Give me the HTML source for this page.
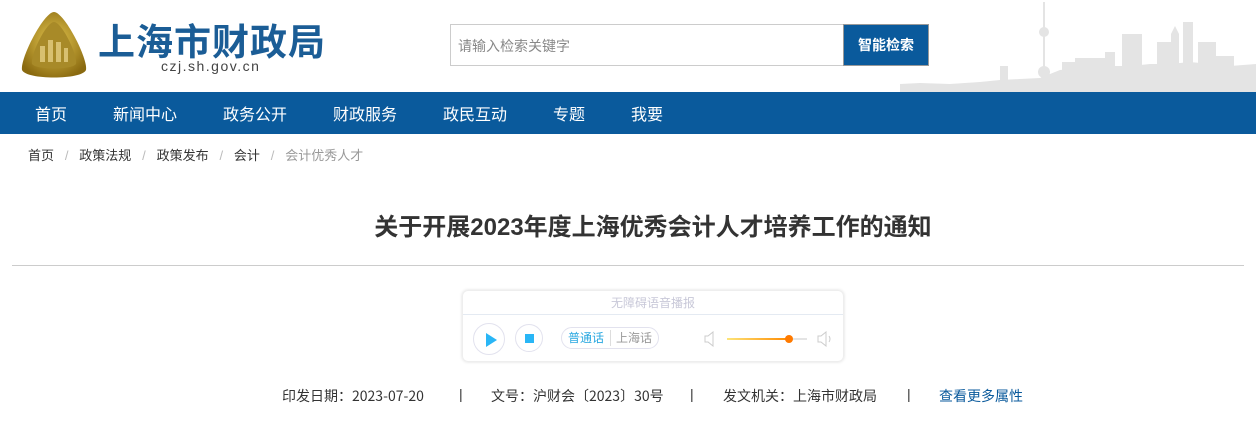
<!DOCTYPE html>
<html><head><meta charset="utf-8"><style>
*{margin:0;padding:0;box-sizing:border-box}
body{width:1256px;height:425px;background:#fff;font-family:"Liberation Sans","Noto Sans CJK SC",sans-serif;position:relative;overflow:hidden;color:#333}
.abs{position:absolute}
.nav{left:0;top:92px;width:1256px;height:42px;background:#0a5a9c}
.nav span{position:absolute;top:9px;color:#fff;font-size:16px}
.bc{top:145px;font-size:13px;color:#333}
.sep{color:#bbb}
</style></head><body>
<svg class="abs" style="left:900px;top:0" width="356" height="92" viewBox="0 0 356 92">
<g fill="#e4e4e4">
<polygon points="0,92 0,84 20,83 50,84 80,82 100,80 120,79 140,78 160,70 200,66 230,66 250,64 270,64 290,62 310,64 330,66 356,64 356,92"/>
<rect x="143" y="2" width="2" height="86"/>
<circle cx="144" cy="32" r="5"/><circle cx="144" cy="72" r="6"/>
<rect x="162" y="62" width="20" height="30"/>
<rect x="175" y="58" width="30" height="34"/>
<rect x="205" y="52" width="10" height="40"/>
<rect x="222" y="34" width="20" height="58"/>
<rect x="257" y="42" width="14" height="50"/>
<polygon points="271,92 271,34 275,26 279,34 279,92"/>
<rect x="283" y="22" width="10" height="70"/>
<rect x="298" y="42" width="18" height="50"/>
<rect x="316" y="56" width="18" height="36"/>
<rect x="336" y="66" width="20" height="26"/>
<rect x="100" y="66" width="8" height="26"/>
</g></svg>
<svg class="abs" style="left:16px;top:10px" width="76" height="70" viewBox="0 0 76 70">
<defs><radialGradient id="g" cx="50%" cy="45%" r="60%"><stop offset="0" stop-color="#e6c850"/><stop offset="1" stop-color="#8a6a10"/></radialGradient></defs>
<path d="M38 2 C48 2 72 48 70 60 C66 70 10 70 6 60 C4 48 28 2 38 2Z" fill="url(#g)"/>
<path d="M38 12 C46 12 62 46 60 54 C56 60 20 60 16 54 C14 46 30 12 38 12Z" fill="#a88a28"/>
<g fill="#d8c070"><rect x="24" y="36" width="5" height="16"/><rect x="32" y="30" width="5" height="22"/><rect x="40" y="32" width="5" height="20"/><rect x="48" y="38" width="4" height="14"/></g>
</svg>
<div class="abs" style="left:98px;top:12px;font-size:37px;font-weight:bold;color:#1b5d96;letter-spacing:1px">上海市财政局</div>
<div class="abs" style="left:161px;top:58px;font-size:14px;color:#444;letter-spacing:1.5px">czj.sh.gov.cn</div>
<div class="abs" style="left:450px;top:24px;width:394px;height:42px;border:1px solid #ccc;font-size:14px;color:#888;padding:11px 7px">请输入检索关键字</div>
<div class="abs" style="left:843px;top:24px;width:86px;height:42px;background:#0a5a9c;border:1px solid #999;color:#fff;font-size:14px;font-weight:bold;text-align:center;line-height:40px">智能检索</div>
<div class="abs nav">
<span style="left:35px">首页</span><span style="left:113px">新闻中心</span><span style="left:223px">政务公开</span><span style="left:333px">财政服务</span><span style="left:443px">政民互动</span><span style="left:553px">专题</span><span style="left:631px">我要</span>
</div>
<div class="abs bc" style="left:28px">首页 <span class="sep">&nbsp;&nbsp;/&nbsp;&nbsp;</span> 政策法规 <span class="sep">&nbsp;&nbsp;/&nbsp;&nbsp;</span> 政策发布 <span class="sep">&nbsp;&nbsp;/&nbsp;&nbsp;</span> 会计 <span class="sep">&nbsp;&nbsp;/&nbsp;&nbsp;</span> <span style="color:#999">会计优秀人才</span></div>
<div class="abs" style="left:0;width:1306px;top:207px;text-align:center;font-size:24px;font-weight:bold;color:#333">关于开展2023年度上海优秀会计人才培养工作的通知</div>
<div class="abs" style="left:12px;top:265px;width:1232px;height:1px;background:#ccc"></div>
<div class="abs" style="left:462px;top:290px;width:382px;height:72px;border:1px solid #eee;border-radius:6px;box-shadow:0 0 3px #ddd">
<div style="height:24px;border-bottom:1px solid #e4eaf2;text-align:center;font-size:12px;color:#c8c8d8;line-height:24px">无障碍语音播报</div>
<div class="abs" style="left:10px;top:32px;width:32px;height:32px;border:1px solid #e2e2ee;border-radius:50%"><div style="position:absolute;left:12px;top:9px;border-left:11px solid #29b6f6;border-top:7px solid transparent;border-bottom:7px solid transparent"></div></div>
<div class="abs" style="left:52px;top:33px;width:28px;height:28px;border:1px solid #e2e2ee;border-radius:50%"><div style="position:absolute;left:9px;top:9px;width:9px;height:9px;background:#29b6f6"></div></div>
<div class="abs" style="left:98px;top:36px;width:98px;height:22px;border:1px solid #e2e2ee;border-radius:11px;font-size:12px;line-height:20px"><span style="position:absolute;left:6px;color:#29a8e0">普通话</span><span style="position:absolute;left:48px;top:2px;height:16px;border-left:1px solid #ddd"></span><span style="position:absolute;left:54px;color:#999">上海话</span></div>
<svg class="abs" style="left:240px;top:40px" width="14" height="16"><path d="M2 5 H5 L10 1 V15 L5 11 H2Z" fill="none" stroke="#ccc"/></svg>
<div class="abs" style="left:264px;top:47px;width:62px;height:2px;background:linear-gradient(90deg,#fde57a,#ff8a00)"></div>
<div class="abs" style="left:326px;top:47px;width:18px;height:2px;background:#e4e4e4"></div>
<div class="abs" style="left:322px;top:44px;width:8px;height:8px;border-radius:50%;background:#ff7a00"></div>
<svg class="abs" style="left:353px;top:40px" width="18" height="16"><path d="M2 5 H5 L10 1 V15 L5 11 H2Z M13 5 Q15 8 13 11" fill="none" stroke="#ccc"/></svg>
</div>
<div class="abs" style="left:282px;top:386px;font-size:14px;color:#333;white-space:pre;font-family:'Noto Sans CJK SC',sans-serif">印发日期：2023-07-20</div>
<div class="abs" style="left:459px;top:386px;font-size:14px;color:#333">|</div>
<div class="abs" style="left:491px;top:386px;font-size:14px;color:#333;font-family:'Noto Sans CJK SC',sans-serif">文号：沪财会〔2023〕30号</div>
<div class="abs" style="left:690px;top:386px;font-size:14px;color:#333">|</div>
<div class="abs" style="left:723px;top:386px;font-size:14px;color:#333;font-family:'Noto Sans CJK SC',sans-serif">发文机关：上海市财政局</div>
<div class="abs" style="left:907px;top:386px;font-size:14px;color:#333">|</div>
<div class="abs" style="left:939px;top:386px;font-size:14px;color:#0a5a9c;font-family:'Noto Sans CJK SC',sans-serif">查看更多属性</div>
</body></html>
